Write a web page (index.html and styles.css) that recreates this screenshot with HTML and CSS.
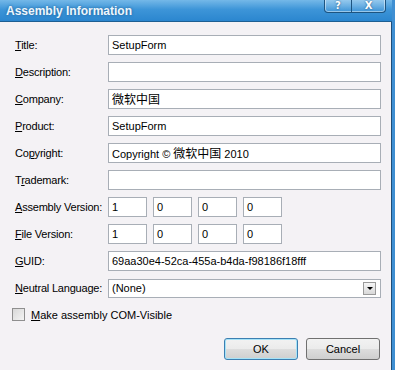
FILE: index.html
```html
<!DOCTYPE html>
<html lang="en">

<head>
    <meta charset="UTF-8">
    <title>Assembly Information</title>
    <link rel="stylesheet" href="styles.css">
</head>

<body>
    <div class="window">
        <!-- Title bar -->
        <div class="titlebar">
            <span class="caption">Assembly Information</span>
            <div class="caption-buttons">
                <span class="cbtn help">?</span>
                <span class="cbtn close">X</span>
            </div>
        </div>

        <div class="content">
            <div class="form">
                <label><u>T</u>itle:</label>
                <div class="field">SetupForm</div>

                <label><u>D</u>escription:</label>
                <div class="field"></div>

                <label><u>C</u>ompany:</label>
                <div class="field"><span class="cjk">微软中国</span></div>

                <label><u>P</u>roduct:</label>
                <div class="field">SetupForm</div>

                <label>Co<u>p</u>yright:</label>
                <div class="field">Copyright © <span class="cjk">微软中国</span> 2010</div>

                <label>T<u>r</u>ademark:</label>
                <div class="field"></div>

                <label><u>A</u>ssembly Version:</label>
                <div class="versions">
                    <div class="field">1</div>
                    <div class="field">0</div>
                    <div class="field">0</div>
                    <div class="field">0</div>
                </div>

                <label><u>F</u>ile Version:</label>
                <div class="versions">
                    <div class="field">1</div>
                    <div class="field">0</div>
                    <div class="field">0</div>
                    <div class="field">0</div>
                </div>

                <label><u>G</u>UID:</label>
                <div class="field">69aa30e4-52ca-455a-b4da-f98186f18fff</div>

                <label><u>N</u>eutral Language:</label>
                <div class="field select">
                    <span>(None)</span>
                    <span class="drop"></span>
                </div>
            </div>

            <div class="check-row">
                <span class="checkbox"></span>
                <span><u>M</u>ake assembly COM-Visible</span>
            </div>

            <div class="buttons">
                <button class="btn default">OK</button>
                <button class="btn">Cancel</button>
            </div>
        </div>
    </div>
</body>

</html>
```

FILE: styles.css
```css
/* Chung */
body {
    margin: 0;
    padding: 0;
    font-family: "Liberation Sans", "Noto Sans CJK SC", sans-serif;
    font-size: 11px;
    color: #000;
    background: #f4f2f5;
}

u {
    text-decoration: underline;
    text-underline-offset: 1px;
}

label {
    letter-spacing: -0.2px;
}

.cjk {
    font-family: "Noto Sans CJK SC", sans-serif;
    font-size: 12px;
}

.window {
    width: 395px;
    height: 370px;
    display: flex;
    flex-direction: column;
    box-sizing: border-box;
    border-right: 3px solid #3f8fd2;
    overflow: hidden;
}

/* Thanh tiêu đề */
.titlebar {
    height: 21px;
    flex: none;
    display: flex;
    align-items: flex-start;
    justify-content: space-between;
    background: linear-gradient(to bottom, #74b8e8, #3d95d8 45%, #2b86cf);
    border-bottom: 1px solid #1e5f93;
    margin-right: -3px;
}

.caption {
    font-family: "Liberation Sans", sans-serif;
    font-weight: bold;
    font-size: 12px;
    color: #eef6fc;
    text-shadow: 0 0 3px #1d5f95;
    padding: 4px 0 0 6px;
}

.caption-buttons {
    display: flex;
    margin-right: 9px;
    margin-top: -1px;
    border: 1px solid #1d5480;
    border-top: none;
    border-radius: 0 0 4px 4px;
    box-shadow: inset 0 0 0 1px rgba(255, 255, 255, 0.45);
    overflow: hidden;
}

.cbtn {
    height: 13px;
    display: flex;
    align-items: center;
    justify-content: center;
    color: #fff;
    font-family: "DejaVu Sans", sans-serif;
    font-weight: bold;
    font-size: 10px;
    text-shadow: 0 0 2px #1d4f78;
    background: linear-gradient(to bottom, rgba(255, 255, 255, 0.25), rgba(255, 255, 255, 0.05));
}

.help {
    width: 26px;
    border-right: 1px solid #1d5480;
}

.close {
    width: 33px;
}

/* Nội dung */
.content {
    flex: 1;
    padding: 13px 11px 0 15px;
    border-right: 1px solid #1e4d78;
}

.form {
    display: grid;
    grid-template-columns: 93px 273px;
    grid-auto-rows: 20px;
    row-gap: 7px;
    align-items: center;
}

.field {
    height: 20px;
    box-sizing: border-box;
    border: 1px solid #a8aeb6;
    background: #fff;
    padding: 0 3px;
    line-height: 18px;
    white-space: nowrap;
    overflow: hidden;
}

.versions {
    display: flex;
    gap: 6px;
}

.versions .field {
    width: 39px;
}

.select {
    display: flex;
    align-items: center;
    justify-content: space-between;
    height: 19px;
    padding-right: 4px;
}

.drop {
    width: 11px;
    height: 11px;
    border: 1px solid #9a9a9a;
    background: linear-gradient(to bottom, #f6f6f6, #d9d9d9);
    position: relative;
}

.drop::after {
    content: "";
    position: absolute;
    left: 3px;
    top: 4px;
    border-left: 3px solid transparent;
    border-right: 3px solid transparent;
    border-top: 3px solid #000;
}

.check-row {
    display: flex;
    align-items: center;
    gap: 6px;
    margin-top: 10px;
    margin-left: -3px;
}

.checkbox {
    width: 11px;
    height: 11px;
    border: 1px solid #8f8f8f;
    background: linear-gradient(135deg, #d8d8d8, #f4f4f4);
}

.buttons {
    display: flex;
    justify-content: flex-end;
    gap: 8px;
    margin-top: 17px;
}

.btn {
    width: 74px;
    height: 22px;
    font-family: "Liberation Sans", sans-serif;
    font-size: 11px;
    border: 1px solid #707070;
    border-radius: 3px;
    background: linear-gradient(to bottom, #f2f2f2 0%, #ebebeb 50%, #dddddd 51%, #cfcfcf 100%);
    padding: 0;
}

.btn.default {
    border-color: #3c7fb1;
    box-shadow: inset 0 0 0 1px #a6e3f8;
}
```
